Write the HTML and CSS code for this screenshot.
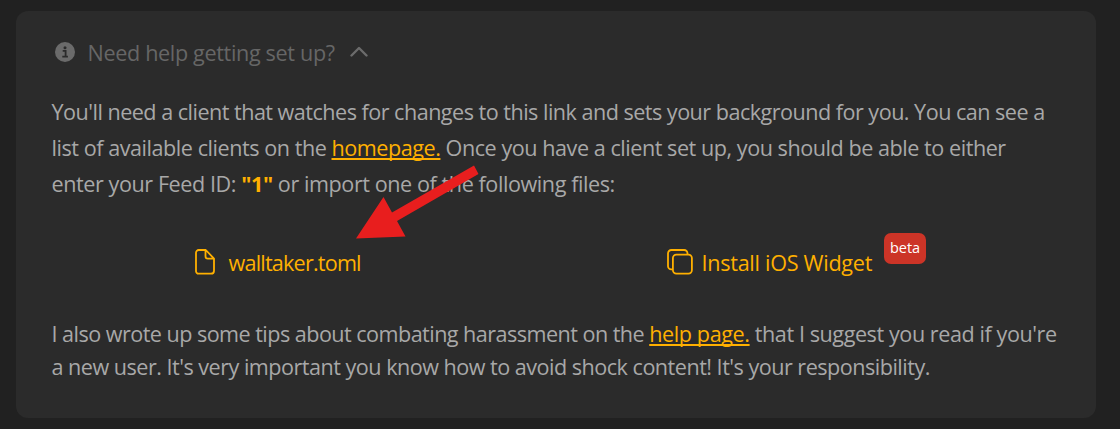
FILE: index.html
```html
<!DOCTYPE html>
<html lang="en">
<head>
<meta charset="utf-8">
<title>Set up help</title>
<link rel="stylesheet" href="styles.css">
</head>
<body>
<main class="card">
  <header class="summary">
    <svg class="info" viewBox="0 0 20 20"><circle cx="10" cy="10" r="10" fill="#6b6b6b"/><circle cx="10" cy="5.8" r="1.5" fill="#2b2b2b"/><path d="M7.7 8.8h2.9v5.4M7.3 14.6h5.6" fill="none" stroke="#2b2b2b" stroke-width="1.8"/></svg>
    <span class="title">Need help getting set up?</span>
    <svg class="chevron" viewBox="0 0 18 12"><path d="M1.5 9.5 9 2l7.5 7.5" fill="none" stroke="#6b6b6b" stroke-width="2.4" stroke-linecap="round" stroke-linejoin="round"/></svg>
  </header>
  <p class="intro">
    <span class="line l1">You'll need a client that watches for changes to this link and sets your background for you. You can see a</span>
    <span class="line l2">list of available clients on the <a href="#">homepage.</a> Once you have a client set up, you should be able to either</span>
    <span class="line l3">enter your Feed ID: <strong>"1"</strong> or import one of the following files:</span>
  </p>
  <div class="files">
    <div class="file">
      <svg class="doc" viewBox="0 0 20 26"><path d="M3.7 1h7.1L19 9.6v12.1a3 3 0 0 1-3 3H3.7a2.7 2.7 0 0 1-2.7-3v-18A2.7 2.7 0 0 1 3.7 1ZM10.5 1v6.3a2.4 2.4 0 0 0 2.4 2.4H19"/></svg>
      <span class="name toml">walltaker.toml</span>
    </div>
    <div class="file">
      <svg class="copy" viewBox="0 0 26 26"><rect x="5.9" y="5.6" width="19" height="19" rx="3.5"/><path d="M5.7 20.4H4.2A3.2 3.2 0 0 1 1 17.2V4.4A3.4 3.4 0 0 1 4.4 1h12.7a3.4 3.4 0 0 1 3.4 3.4v1"/></svg>
      <span class="name widget">Install iOS Widget</span>
      <span class="beta">beta</span>
    </div>
  </div>
  <p class="tips">
    <span class="line l4">I also wrote up some tips about combating harassment on the <a href="#">help page.</a><span class="rest"> that I suggest you read if you're</span></span>
    <span class="line l5">a new user. It's very important you know how to avoid shock content! It's your responsibility.</span>
  </p>
  <svg class="arrow" viewBox="0 0 124 72"><path d="M118 -.5 122.5 8 41 55 49.5 70.5 0 72.5 27.5 31 36 46.5Z" fill="#e81e1e"/></svg>
</main>
</body>
</html>
```
FILE: styles.css
```css
* { box-sizing: border-box; }
body {
  margin: 0;
  height: 429px;
  padding: 11px 24px 0 16px;
  overflow: hidden;
  background: #212121;
  color: #a8a8a8;
  font: 21.6px/36px "Open Sans", "Noto Sans", sans-serif;
}
.card {
  position: relative;
  height: 407px;
  padding: 24px 36px 0 35.5px;
  border-radius: 12px;
  background: #2b2b2b;
}
.summary {
  display: flex;
  align-items: center;
  height: 36px;
  padding-left: 3px;
  color: #666;
}
.info { width: 20px; height: 20px; margin: 0 13px 2px 0; }
.title { width: 247px; white-space: nowrap; letter-spacing: -0.34px; }
.chevron { width: 18px; height: 12px; margin: 0 0 2px 15px; }
p { margin: 0; }
.line { display: block; white-space: nowrap; }
.l1 { letter-spacing: -0.52px; }
.l2 { letter-spacing: -0.46px; }
.l3 { letter-spacing: -0.43px; }
.l4 { letter-spacing: -0.54px; }
.l4 a { letter-spacing: -0.4px; }
.rest { letter-spacing: -0.43px; }
.l5 { letter-spacing: -0.51px; }
.intro { padding-top: 23px; }
a { color: #ffb000; text-decoration-thickness: 2px; text-underline-offset: 2px; text-decoration-skip-ink: none; }
strong { color: #ffb000; }
.files {
  display: flex;
  height: 72px;
  margin-top: 43px;
  color: #ffb000;
}
.file { display: flex; height: 36px; align-items: center; }
.file svg { fill: none; stroke: #ffb000; stroke-width: 1.8; stroke-linejoin: round; flex: none; }
.doc { width: 20px; height: 26px; margin: 0 14px 3px 143px; }
.copy { width: 26px; height: 26px; margin: 0 9px 3px 305px; }
.name { white-space: nowrap; }
.toml { width: 133px; letter-spacing: -0.8px; }
.widget { width: 171.5px; letter-spacing: -0.28px; }
.beta {
  width: 42px;
  height: 31px;
  margin: 0 0 29px 11px;
  border-radius: 7px;
  background: #cc3427;
  color: #fff;
  font-size: 14.5px;
  line-height: 30px;
  text-align: center;
}
.tips { line-height: 33px; }
.arrow { position: absolute; left: 340px; top: 155px; width: 124px; height: 72px; overflow: visible; }
```
